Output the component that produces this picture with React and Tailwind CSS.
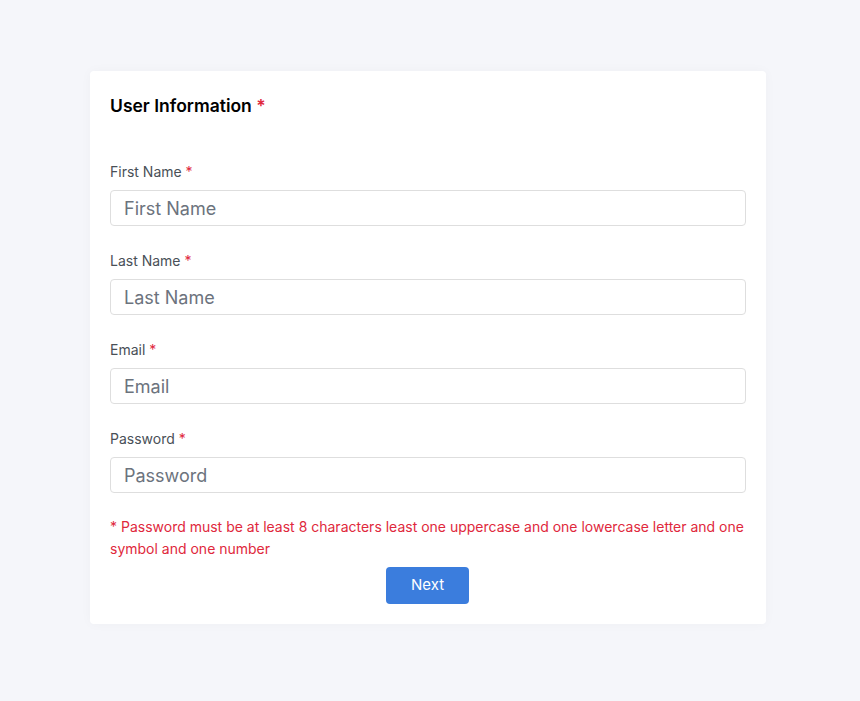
const fields = [
  { label: "First Name", type: "text" },
  { label: "Last Name", type: "text" },
  { label: "Email", type: "email" },
  { label: "Password", type: "password" },
];

export default function App() {
  return (
    <div
      className="min-h-[701px] bg-[#f5f6fa] pt-[71px] px-[90px]"
      style={{ fontFamily: "Inter, 'Noto Sans', sans-serif" }}
    >
      <div className="bg-white rounded-[4px] shadow-[0_0_12px_rgba(0,0,0,0.03)] p-5 w-[676px]">
        <h2 className="text-[17.5px] leading-[30px] font-semibold text-black">
          User Information <span className="text-[#e0283c]">*</span>
        </h2>

        <form className="mt-[41px]" onSubmit={(e) => e.preventDefault()}>
          {fields.map((f, i) => (
            <div key={f.label} className={i > 0 ? "mt-[25px]" : ""}>
              <label className="block text-[14px] leading-[20px] text-[#495057]">
                {f.label} <span className="text-[#e0283c]">*</span>
              </label>
              <input
                type={f.type}
                placeholder={f.label}
                className="mt-2 block w-full h-[36px] border border-[#dedede] rounded-[4px] px-[13px] text-[18px] text-[#333] placeholder:text-[#6c737d] outline-none"
              />
            </div>
          ))}

          <p className="mt-[23px] text-[14px] leading-[22px] text-[#e0283c]">
            * Password must be at least 8 characters least one uppercase and one lowercase letter and one symbol and one number
          </p>

          <div className="flex justify-center mt-[7px] pr-px">
            <button
              type="submit"
              className="w-[83px] h-[37px] rounded-[4px] bg-[#3b7ddd] text-white text-[15px]"
            >
              Next
            </button>
          </div>
        </form>
      </div>
    </div>
  );
}
